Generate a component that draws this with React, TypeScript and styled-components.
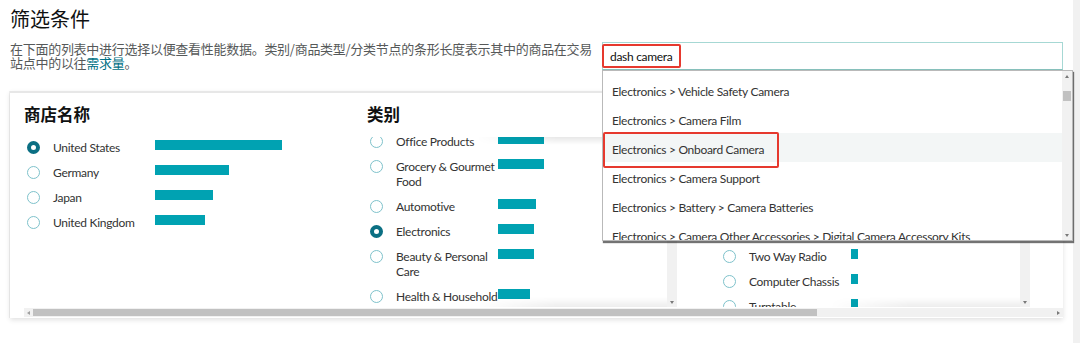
import React from "react";
import styled, { createGlobalStyle } from "styled-components";

const Global = createGlobalStyle`
  html, body { margin: 0; padding: 0; background: #fff; }
  body {
    width: 1080px; height: 343px; overflow: hidden;
    font-family: "Lato", "Noto Sans CJK SC", sans-serif;
  }
  * { box-sizing: border-box; }
`;

const LATIN = `"Lato", "Noto Sans CJK SC", sans-serif`;
const CJK = `"Noto Sans CJK SC", sans-serif`;

const Page = styled.div`
  display: flex;
  width: 1080px;
  height: 343px;
  background: #fff;
`;

const Main = styled.div`
  width: 1073px;
  padding: 5px 10px 0 10px;
`;

const PageScroll = styled.div`
  width: 7px;
  background: #f1f1f1;
`;

const Title = styled.h1`
  margin: 0;
  font: 400 20px/28px ${CJK};
  color: #0f1111;
`;

const TopRow = styled.div`
  display: flex;
  align-items: flex-start;
  margin-top: 9px;
`;

const Desc = styled.p`
  margin: 0 2px 0 0;
  width: 590px;
  white-space: nowrap;
  letter-spacing: -0.28px;
  font: 400 13px/14px ${CJK};
  color: #565959;
`;

const Link = styled.span`
  color: #007185;
`;

const SearchWrap = styled.div`
  position: relative;
  flex: 1;
`;

const SearchBox = styled.div`
  height: 28px;
  border: 1px solid #a6d8d4;
  border-bottom-color: #86c0bb;
  padding-left: 7px;
  display: flex;
  align-items: center;
  font: 400 12px ${LATIN};
  letter-spacing: -0.3px;
  color: #0f1111;
`;

const Mark = styled.div<{ $l: number; $t: number; $w: number; $h: number }>`
  position: absolute;
  left: ${(p) => p.$l}px;
  top: ${(p) => p.$t}px;
  width: ${(p) => p.$w}px;
  height: ${(p) => p.$h}px;
  border: 2px solid #e6392e;
  border-radius: 2px;
  pointer-events: none;
  z-index: 3;
`;

const Dropdown = styled.div`
  position: absolute;
  top: 28px;
  left: 0;
  width: 471px;
  height: 171px;
  background: #fff;
  border: 1px solid #b9b9b9;
  box-shadow: 1px 2px 1px rgba(0, 0, 0, 0.55);
  display: flex;
  z-index: 2;
`;

const Options = styled.div`
  flex: 1;
  overflow: hidden;
  padding-top: 4px;
`;

const Option = styled.div<{ $active?: boolean }>`
  height: 29px;
  padding: 4px 0 0 9px;
  display: flex;
  align-items: center;
  white-space: nowrap;
  font: 400 12px/15px ${LATIN};
  letter-spacing: -0.3px;
  color: #333;
  background: ${(p) => (p.$active ? "#f3f6f6" : "transparent")};
`;

const VBar = styled.div<{ $w: number }>`
  width: ${(p) => p.$w}px;
  flex: none;
  background: #f1f1f1;
  display: flex;
  flex-direction: column;
`;

const Arrow = styled.div<{ $dir: "up" | "down" | "left" | "right" }>`
  flex: none;
  width: 9px;
  height: 10px;
  display: flex;
  align-items: center;
  justify-content: center;
  &::after {
    content: "";
    width: 0;
    height: 0;
    ${(p) =>
      p.$dir === "up"
        ? "border-left: 2.5px solid transparent; border-right: 2.5px solid transparent; border-bottom: 3px solid #7a7a7a;"
        : p.$dir === "down"
        ? "border-left: 2.5px solid transparent; border-right: 2.5px solid transparent; border-top: 3px solid #7a7a7a;"
        : p.$dir === "left"
        ? "border-top: 2.5px solid transparent; border-bottom: 2.5px solid transparent; border-right: 3px solid #a0a0a0;"
        : "border-top: 2.5px solid transparent; border-bottom: 2.5px solid transparent; border-left: 3px solid #7a7a7a;"}
  }
`;

const VTrack = styled.div`
  flex: 1;
  padding: 0 1px;
`;

const VThumb = styled.div<{ $top: number; $len: number }>`
  margin-top: ${(p) => p.$top}px;
  height: ${(p) => p.$len}px;
  background: #c1c1c1;
`;

const Panel = styled.section`
  margin-top: 21px;
  background: #fff;
  border-top: 2px solid #e7e7e7;
  box-shadow: 0 2px 5px rgba(0, 0, 0, 0.12), -1px 0 0 #f1f1f1;
  padding-bottom: 1px;
`;

const Columns = styled.div`
  display: grid;
  grid-template-columns: 343px 353px 1fr;
  height: 215px;
  overflow: hidden;
`;

const Column = styled.div`
  padding: 10px 0 0 14px;
  min-width: 0;
`;

const ColTitle = styled.h2`
  margin: 0;
  font: 700 16.5px/23px ${CJK};
  color: #0f1111;
`;

const PlainList = styled.div`
  margin-top: 8.5px;
`;

const ScrollList = styled.div`
  margin-top: 11px;
  width: 310px;
  height: 170px;
  display: flex;
`;

const Viewport = styled.div`
  position: relative;
  flex: 1;
  overflow: hidden;
  &::before,
  &::after {
    content: "";
    position: absolute;
    left: 110px;
    right: 0;
    z-index: 1;
    -webkit-mask-image: linear-gradient(to right, transparent, #000 80px);
    mask-image: linear-gradient(to right, transparent, #000 80px);
  }
  &::before {
    top: 0;
    height: 8px;
    background: linear-gradient(to bottom, rgba(0, 0, 0, 0.09), rgba(0, 0, 0, 0));
  }
  &::after {
    bottom: 0;
    height: 10px;
    background: linear-gradient(to top, rgba(0, 0, 0, 0.07), rgba(0, 0, 0, 0));
  }
`;

const Inner = styled.div<{ $shift: number }>`
  margin-top: ${(p) => p.$shift}px;
`;

const Row = styled.div`
  display: flex;
  align-items: flex-start;
  padding: 5px 0 5px 3px;
`;

const Radio = styled.span<{ $on?: boolean }>`
  flex: none;
  width: 13px;
  height: 13px;
  margin-top: 1px;
  border-radius: 50%;
  background: #fff;
  border: ${(p) => (p.$on ? "4px solid #0b6f83" : "1.2px solid #7ec2cb")};
`;

const Label = styled.span`
  flex: none;
  width: 102px;
  margin-left: 13px;
  white-space: nowrap;
  font: 400 12px/15px ${LATIN};
  letter-spacing: -0.3px;
  color: #333;
`;

const Bar = styled.span<{ $w: number }>`
  flex: none;
  width: ${(p) => p.$w}px;
  height: 10px;
  margin-top: 0.5px;
  background: #00a2b2;
`;

const HScroll = styled.div`
  margin-left: 14px;
  height: 9px;
  display: flex;
  background: #f1f1f1;
`;

const HTrack = styled.div`
  flex: 1;
  padding: 1px 0;
`;

const HThumb = styled.div<{ $len: number }>`
  width: ${(p) => p.$len}px;
  height: 100%;
  background: #c1c1c1;
`;

type Item = { lines: string[]; bar: number; on?: boolean };

const stores: Item[] = [
  { lines: ["United States"], bar: 127, on: true },
  { lines: ["Germany"], bar: 74 },
  { lines: ["Japan"], bar: 58 },
  { lines: ["United Kingdom"], bar: 50 },
];

const categories: Item[] = [
  { lines: ["Office Products"], bar: 46 },
  { lines: ["Grocery & Gourmet", "Food"], bar: 46 },
  { lines: ["Automotive"], bar: 38 },
  { lines: ["Electronics"], bar: 36, on: true },
  { lines: ["Beauty & Personal", "Care"], bar: 36 },
  { lines: ["Health & Household"], bar: 32 },
  { lines: ["Toys & Games"], bar: 28 },
];

const productTypes: Item[] = [
  { lines: ["Camera"], bar: 62 },
  { lines: ["Dashboard Camera"], bar: 40 },
  { lines: ["Security Camera"], bar: 22 },
  { lines: ["Car Audio"], bar: 12 },
  { lines: ["Two Way Radio"], bar: 7 },
  { lines: ["Computer Chassis"], bar: 7 },
  { lines: ["Turntable"], bar: 7 },
  { lines: ["Headphones"], bar: 6 },
];

const options = [
  "Electronics > Vehicle Safety Camera",
  "Electronics > Camera Film",
  "Electronics > Onboard Camera",
  "Electronics > Camera Support",
  "Electronics > Battery > Camera Batteries",
  "Electronics > Camera Other Accessories > Digital Camera Accessory Kits",
];

function Rows({ items }: { items: Item[] }) {
  return (
    <>
      {items.map((it) => (
        <Row key={it.lines.join(" ")}>
          <Radio $on={it.on} />
          <Label>
            {it.lines.map((l, i) => (
              <React.Fragment key={l}>
                {i > 0 && <br />}
                {l}
              </React.Fragment>
            ))}
          </Label>
          <Bar $w={it.bar} />
        </Row>
      ))}
    </>
  );
}

function VScrollbar({ top, len }: { top: number; len: number }) {
  return (
    <VBar $w={10}>
      <Arrow $dir="up" />
      <VTrack>
        <VThumb $top={top} $len={len} />
      </VTrack>
      <Arrow $dir="down" />
    </VBar>
  );
}

export default function App() {
  return (
    <>
      <Global />
      <Page>
        <Main>
          <Title>筛选条件</Title>
          <TopRow>
            <Desc>
              在下面的列表中进行选择以便查看性能数据。类别/商品类型/分类节点的条形长度表示其中的商品在交易
              <br />
              站点中的以往<Link>需求量</Link>。
            </Desc>
            <SearchWrap>
              <SearchBox>dash camera</SearchBox>
              <Mark $l={0} $t={2} $w={79} $h={24} />
              <Dropdown>
                <Options>
                  {options.map((o, i) => (
                    <Option key={o} $active={i === 2}>
                      {o}
                    </Option>
                  ))}
                </Options>
                <VScrollbar top={10} len={10} />
                <Mark $l={0} $t={61} $w={176} $h={36} />
              </Dropdown>
            </SearchWrap>
          </TopRow>
          <Panel>
            <Columns>
              <Column>
                <ColTitle>商店名称</ColTitle>
                <PlainList>
                  <Rows items={stores} />
                </PlainList>
              </Column>
              <Column>
                <ColTitle>类别</ColTitle>
                <ScrollList>
                  <Viewport>
                    <Inner $shift={-8.5}>
                      <Rows items={categories} />
                    </Inner>
                  </Viewport>
                  <VScrollbar top={20} len={30} />
                </ScrollList>
              </Column>
              <Column>
                <ColTitle>商品类型</ColTitle>
                <ScrollList>
                  <Viewport>
                    <Inner $shift={6.5}>
                      <Rows items={productTypes} />
                    </Inner>
                  </Viewport>
                  <VScrollbar top={20} len={30} />
                </ScrollList>
              </Column>
            </Columns>
            <HScroll>
              <Arrow $dir="left" />
              <HTrack>
                <HThumb $len={784} />
              </HTrack>
              <Arrow $dir="right" />
            </HScroll>
          </Panel>
        </Main>
        <PageScroll />
      </Page>
    </>
  );
}
